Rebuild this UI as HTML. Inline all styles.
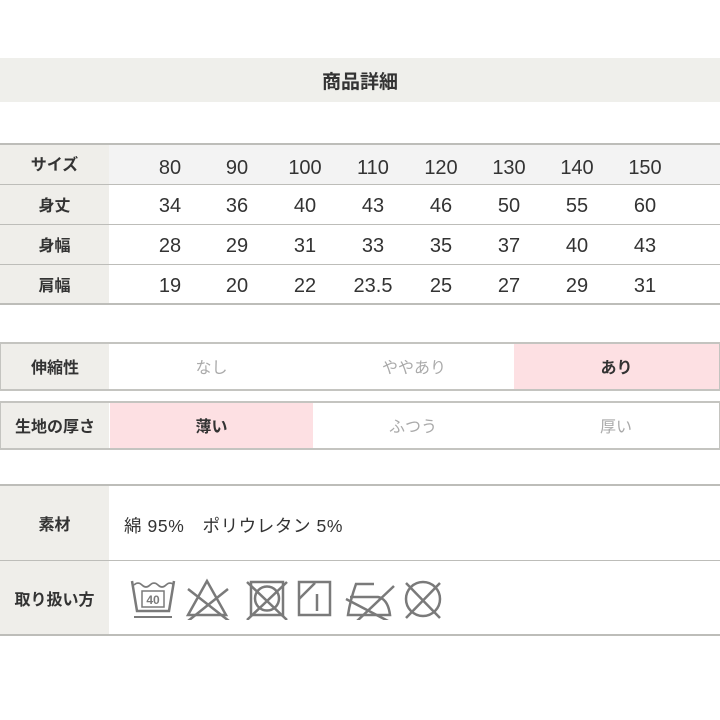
<!DOCTYPE html>
<html><head><meta charset="utf-8"><style>
*{margin:0;padding:0;box-sizing:border-box}
body{width:720px;height:720px;background:#fff;position:relative;overflow:hidden;font-family:"Liberation Sans","Noto Sans CJK JP",sans-serif;color:#333}
.a{position:absolute}
.c{display:flex;align-items:center;justify-content:center}
.lab{font-weight:bold;font-size:16px;color:#333;background:#efeeea}
.hr{position:absolute;left:0;width:720px;background:#bdbdb9}
.num{position:absolute;width:68px;text-align:center;font-size:20px;color:#333}
</style></head><body>
<div class="a c" style="left:0;top:58px;width:720px;height:44px;background:#efefeb;font-size:19px;font-weight:bold;color:#333">商品詳細</div>

<div class="a" style="left:0;top:144px;width:109px;height:160px;background:#efeeea"></div>
<div class="a" style="left:109px;top:144px;width:611px;height:40px;background:#f3f3f3"></div>
<div class="hr" style="top:143px;height:2px"></div>
<div class="hr" style="top:184px;height:1px"></div>
<div class="hr" style="top:224px;height:1px"></div>
<div class="hr" style="top:264px;height:1px"></div>
<div class="hr" style="top:303px;height:2px"></div>
<div class="a c lab" style="left:0;top:145px;width:109px;height:36px;background:none">サイズ</div>
<div class="a c lab" style="left:0;top:185px;width:109px;height:37px;background:none">身丈</div>
<div class="a c lab" style="left:0;top:225px;width:109px;height:37px;background:none">身幅</div>
<div class="a c lab" style="left:0;top:265px;width:109px;height:37px;background:none">肩幅</div>

<div class="num" style="top:157px;left:136px">80</div><div class="num" style="top:157px;left:203px">90</div><div class="num" style="top:157px;left:271px">100</div><div class="num" style="top:157px;left:339px">110</div><div class="num" style="top:157px;left:407px">120</div><div class="num" style="top:157px;left:475px">130</div><div class="num" style="top:157px;left:543px">140</div><div class="num" style="top:157px;left:611px">150</div>
<div class="num" style="top:195px;left:136px">34</div><div class="num" style="top:195px;left:203px">36</div><div class="num" style="top:195px;left:271px">40</div><div class="num" style="top:195px;left:339px">43</div><div class="num" style="top:195px;left:407px">46</div><div class="num" style="top:195px;left:475px">50</div><div class="num" style="top:195px;left:543px">55</div><div class="num" style="top:195px;left:611px">60</div>
<div class="num" style="top:235px;left:136px">28</div><div class="num" style="top:235px;left:203px">29</div><div class="num" style="top:235px;left:271px">31</div><div class="num" style="top:235px;left:339px">33</div><div class="num" style="top:235px;left:407px">35</div><div class="num" style="top:235px;left:475px">37</div><div class="num" style="top:235px;left:543px">40</div><div class="num" style="top:235px;left:611px">43</div>
<div class="num" style="top:275px;left:136px">19</div><div class="num" style="top:275px;left:203px">20</div><div class="num" style="top:275px;left:271px">22</div><div class="num" style="top:275px;left:339px">23.5</div><div class="num" style="top:275px;left:407px">25</div><div class="num" style="top:275px;left:475px">27</div><div class="num" style="top:275px;left:543px">29</div><div class="num" style="top:275px;left:611px">31</div>

<div class="a" style="left:0;top:342px;width:720px;height:49px;border:2px solid #c4c4c0;border-width:2px 1px"></div>
<div class="a c lab" style="left:1px;top:344px;width:108px;height:45px;padding-bottom:2px">伸縮性</div>
<div class="a c" style="left:109px;top:344px;width:205px;height:43px;font-size:16px;color:#aaa">なし</div>
<div class="a c" style="left:314px;top:344px;width:200px;height:43px;font-size:16px;color:#aaa">ややあり</div>
<div class="a" style="left:514px;top:344px;width:205px;height:45px;background:#fde0e3"></div>
<div class="a c" style="left:514px;top:344px;width:205px;height:43px;font-size:16px;font-weight:bold">あり</div>

<div class="a" style="left:0;top:401px;width:720px;height:49px;border:2px solid #c4c4c0;border-width:2px 1px"></div>
<div class="a" style="left:110px;top:403px;width:203px;height:45px;background:#fde0e3"></div>
<div class="a c lab" style="left:1px;top:403px;width:108px;height:45px;padding-bottom:2px">生地の厚さ</div>
<div class="a c" style="left:110px;top:403px;width:203px;height:43px;font-size:16px;font-weight:bold">薄い</div>
<div class="a c" style="left:313px;top:403px;width:200px;height:43px;font-size:16px;color:#aaa">ふつう</div>
<div class="a c" style="left:513px;top:403px;width:206px;height:43px;font-size:16px;color:#aaa">厚い</div>

<div class="a" style="left:0;top:486px;width:109px;height:149px;background:#efeeea"></div>
<div class="hr" style="top:484px;height:2px"></div>
<div class="hr" style="top:560px;height:1px"></div>
<div class="hr" style="top:634px;height:2px"></div>
<div class="a c lab" style="left:0;top:486px;width:109px;height:74px;background:none">素材</div>
<div class="a c lab" style="left:0;top:561px;width:109px;height:73px;background:none">取り扱い方</div>
<div class="a" style="left:124px;top:513px;font-size:17.5px;letter-spacing:0.6px;color:#333">綿 95%　ポリウレタン 5%</div>

<svg class="a" style="left:128px;top:575px" width="320" height="45" viewBox="0 0 320 45" fill="none" stroke="#7a7a7a" stroke-width="2.5">
<path d="M4 6 L9 36 L41 36 L46 6"/>
<path d="M6 10 q4 -4 8 0 q4 4 8 0 q4 -4 8 0 q4 4 8 0 q4 -4 8 0" stroke-width="1.6"/>
<path d="M6 42 H44" stroke-width="2"/>
<rect x="14" y="16" width="22" height="16" stroke-width="1.5"/>
<text x="25" y="29" font-size="12" font-family="Liberation Sans" text-anchor="middle" fill="#7a7a7a" stroke="none" font-weight="bold">40</text>
<path d="M79 6 L60 40 L98 40 Z"/>
<path d="M60 14 L101 46 M100 14 L60 46"/>
<rect x="123" y="7" width="32" height="33"/>
<circle cx="139" cy="23.5" r="12"/>
<path d="M119 7 L159 45 M159 7 L119 45"/>
<rect x="171" y="7" width="31" height="33"/>
<path d="M171 24 L187 8 M189 19 V36"/>
<path d="M246 9 L228 9 Q222 26 220 40 L262 40 Q260 24 250 22 L222 22"/>
<path d="M218 24 L262 47 M266 11 L228 47"/>
<circle cx="295" cy="24" r="17"/>
<path d="M278 8 L312 43 M312 8 L278 43"/>
</svg>
</body></html>
